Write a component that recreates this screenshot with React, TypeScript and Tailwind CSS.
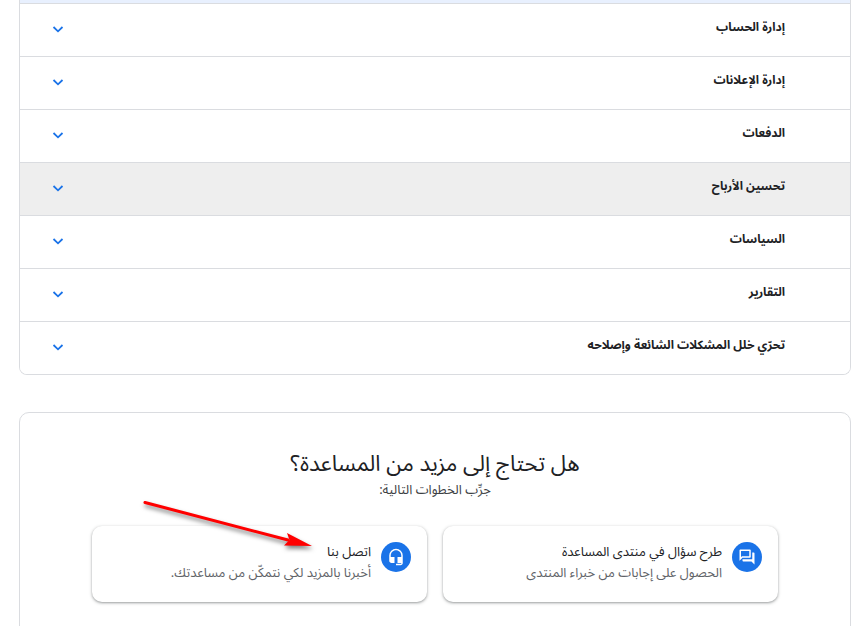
import type { ComponentType } from 'react'

type IconProps = { className?: string }

type Topic = {
  label: string
  highlighted?: boolean
}

const topics: Topic[] = [
  { label: 'إدارة الحساب' },
  { label: 'إدارة الإعلانات' },
  { label: 'الدفعات' },
  { label: 'تحسين الأرباح', highlighted: true },
  { label: 'السياسات' },
  { label: 'التقارير' },
  { label: 'تحرّي خلل المشكلات الشائعة وإصلاحه' },
]

function ChevronIcon({ className }: IconProps) {
  return (
    <svg viewBox="0 0 18 18" className={className} fill="none" aria-hidden>
      <path d="M4.5 6 9 10.3 13.5 6" stroke="currentColor" strokeWidth="1.8" />
    </svg>
  )
}

function ForumIcon({ className }: IconProps) {
  return (
    <svg viewBox="0 0 24 24" className={className} fill="currentColor" aria-hidden>
      <path d="M15 4v7H5.17L4 12.17V4h11m1-2H3c-.55 0-1 .45-1 1v14l4-4h10c.55 0 1-.45 1-1V3c0-.55-.45-1-1-1zm5 4h-2v9H6v2c0 .55.45 1 1 1h11l4 4V7c0-.55-.45-1-1-1z" />
    </svg>
  )
}

function HeadsetIcon({ className }: IconProps) {
  return (
    <svg viewBox="0 0 24 24" className={className} fill="currentColor" aria-hidden>
      <path d="M12 1a9 9 0 0 0-9 9v7c0 1.66 1.34 3 3 3h4v-8H5v-2c0-3.87 3.13-7 7-7s7 3.13 7 7v2h-5v8h5v1h-7v2h6c1.66 0 3-1.34 3-3V10a9 9 0 0 0-9-9z" />
    </svg>
  )
}

function TopicRow({ topic }: { topic: Topic }) {
  return (
    <button
      type="button"
      aria-expanded={false}
      className={`flex h-[53px] w-full items-center justify-between border-t border-[#dadce0] pr-[65px] pl-[29px] text-[#202124] ${
        topic.highlighted ? 'bg-[#eeeeee]' : 'bg-white hover:bg-[#eeeeee]'
      }`}
    >
      <span className="pb-1 text-xs leading-5 font-bold">{topic.label}</span>
      <ChevronIcon className="size-[18px] shrink-0 text-[#1a73e8]" />
    </button>
  )
}

type HelpCardProps = {
  title: string
  description: string
  Icon: ComponentType<IconProps>
}

function HelpCard({ title, description, Icon }: HelpCardProps) {
  return (
    <a
      href="#"
      className="flex min-w-0 flex-1 items-start gap-[10px] rounded-[10px] bg-white px-4 pt-4 pb-[18px] shadow-[0_1px_2px_rgba(60,64,67,0.35),0_1px_3px_1px_rgba(60,64,67,0.15)]"
    >
      <span className="flex size-[30px] shrink-0 items-center justify-center rounded-full bg-[#1a73e8] text-white">
        <Icon className="size-[18px]" />
      </span>
      <span className="flex min-w-0 flex-col text-[13px] leading-[21px]">
        <span className="text-[#202124]">{title}</span>
        <span className="text-[#5f6368]">{description}</span>
      </span>
    </a>
  )
}

function PointerArrow() {
  return (
    <svg
      viewBox="0 0 184 64"
      className="pointer-events-none absolute top-[84px] left-[118px] h-16 w-[184px] drop-shadow-[1px_3px_2px_rgba(0,0,0,0.5)]"
      aria-hidden
    >
      <path d="M7 5.5 150 43" stroke="#f00" strokeWidth="3" strokeLinecap="round" />
      <path d="M174 49 149 36 151.500 43 146 48.500Z" fill="#f00" />
    </svg>
  )
}

export default function App() {
  return (
    <main
      dir="rtl"
      lang="ar"
      className="min-h-screen overflow-hidden bg-white pr-[7px] pl-[19px] font-['Noto_Sans_Arabic','Noto_Sans','DejaVu_Sans',sans-serif]"
    >
      <section className="overflow-hidden rounded-b-lg border border-t-0 border-[#dadce0]">
        <div className="h-[3px] bg-[#e8f0fe]" />
        {topics.map((topic) => (
          <TopicRow key={topic.label} topic={topic} />
        ))}
      </section>

      <section className="relative mt-[37px] rounded-[10px] border border-[#dadce0] px-[72px] pt-[35px] pb-12">
        <h2 className="text-center text-[22px] leading-8 text-[#202124]">
          هل تحتاج إلى مزيد من المساعدة؟
        </h2>
        <p className="text-center text-[13px] leading-5 text-[#3c4043]">
          جرِّب الخطوات التالية:
        </p>
        <div className="mt-[26px] flex gap-4">
          <HelpCard
            title="طرح سؤال في منتدى المساعدة"
            description="الحصول على إجابات من خبراء المنتدى"
            Icon={ForumIcon}
          />
          <HelpCard
            title="اتصل بنا"
            description="أخبرنا بالمزيد لكي نتمكّن من مساعدتك."
            Icon={HeadsetIcon}
          />
        </div>
        <PointerArrow />
      </section>
    </main>
  )
}
